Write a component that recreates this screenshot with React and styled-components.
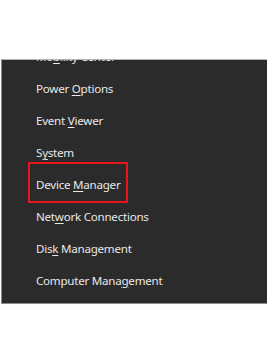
import React from "react";
import styled, { createGlobalStyle } from "styled-components";

const GlobalStyle = createGlobalStyle`
  html, body {
    margin: 0;
    padding: 0;
    background: #ffffff;
  }
  body {
    font-family: "Noto Sans", "Open Sans", sans-serif;
  }
`;

const items = [
  { before: "Mo", key: "b", after: "ility Center" },
  { before: "Power ", key: "O", after: "ptions" },
  { before: "Event ", key: "V", after: "iewer" },
  { before: "S", key: "y", after: "stem" },
  { before: "Device ", key: "M", after: "anager", highlighted: true },
  { before: "Net", key: "w", after: "ork Connections" },
  { before: "Dis", key: "k", after: " Management" },
  { before: "Computer Mana", key: "g", after: "ement" },
];

export default function App() {
  return (
    <>
      <GlobalStyle />
      <Page>
        <Menu>
          <List>
            {items.map((item, index) => (
              <Item key={index} highlighted={item.highlighted}>
                {item.before}
                <Key>{item.key}</Key>
                {item.after}
              </Item>
            ))}
          </List>
        </Menu>
      </Page>
    </>
  );
}

const Page = styled.div`
  width: 267px;
  height: 349px;
  padding-top: 59px;
  padding-left: 1px;
  box-sizing: border-box;
  overflow: hidden;
`;

const Menu = styled.div`
  background: #2b2b2b;
  border-top: 1px solid #b4b4b4;
  border-left: 1px solid #8c8c8c;
  border-bottom: 1px solid #8c8c8c;
  height: 245px;
  width: 280px;
  box-sizing: border-box;
  overflow: hidden;
`;

const List = styled.ul`
  list-style: none;
  margin: -19px 0 0 0;
  padding: 0;
`;

const Item = styled.li`
  position: relative;
  height: 32px;
  line-height: 32px;
  padding-left: 34px;
  font-size: 11.6px;
  letter-spacing: -0.25px;
  color: #e8e8e8;
  white-space: pre;
  &::after {
    content: "";
    display: ${props => props.highlighted ? "block" : "none"};
    position: absolute;
    left: 26px;
    top: -7px;
    width: 100px;
    height: 41px;
    border: 2px solid #e8141c;
    box-sizing: border-box;
  }
`;

const Key = styled.span`
  text-decoration: underline;
  text-underline-offset: 2px;
`;
